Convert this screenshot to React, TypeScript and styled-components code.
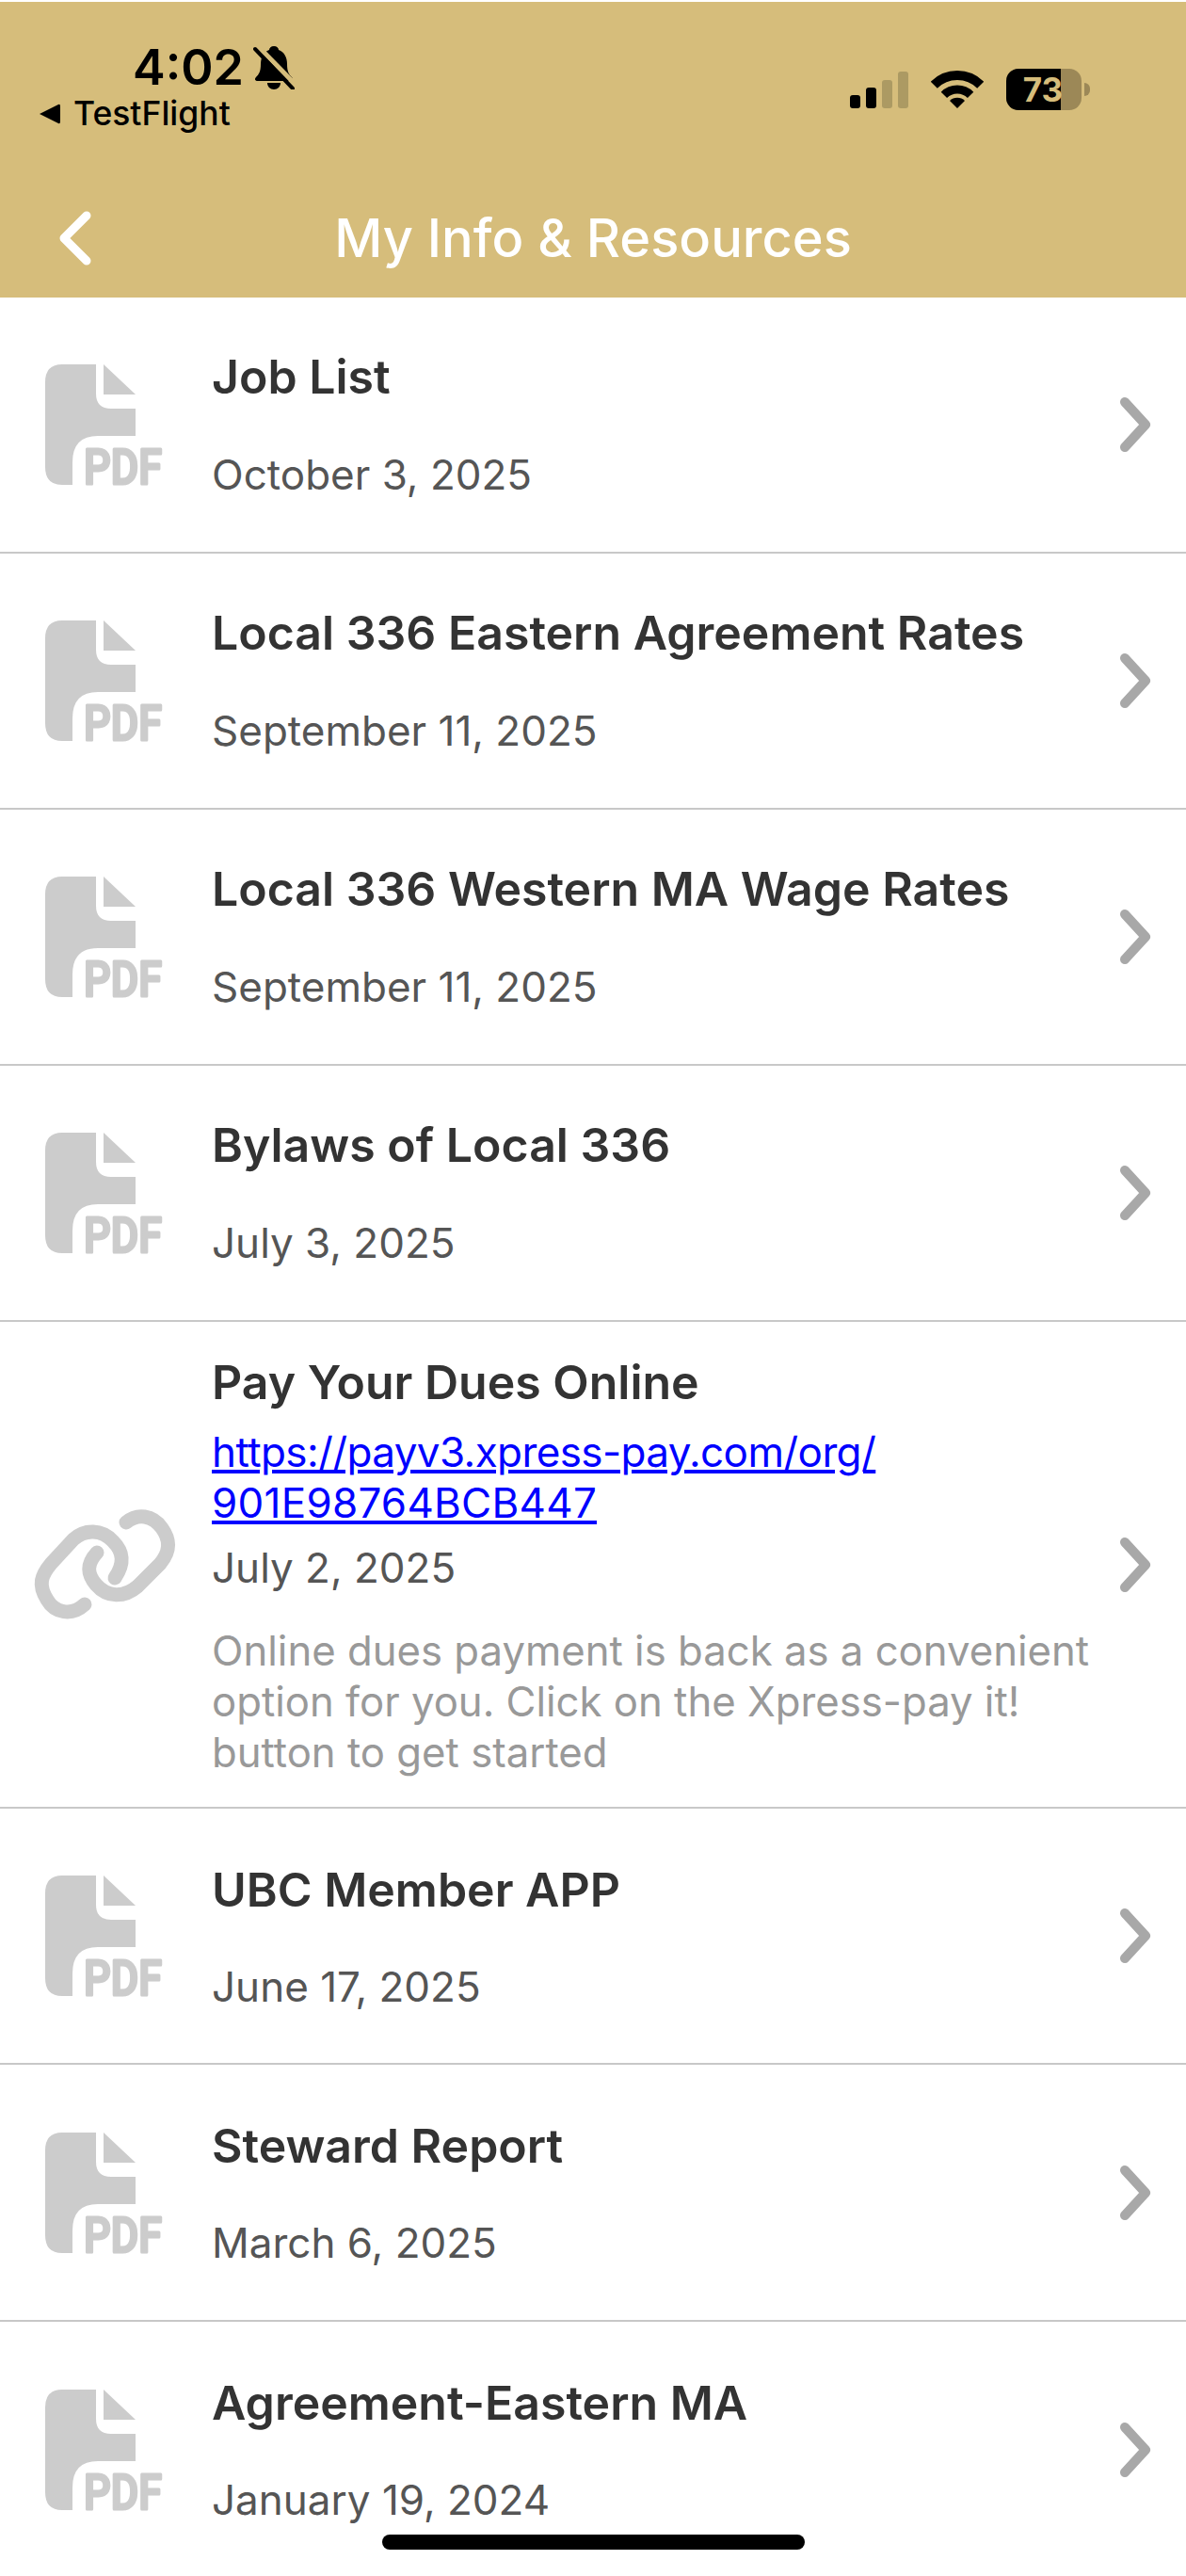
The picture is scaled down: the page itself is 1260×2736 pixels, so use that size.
import React from "react";
import styled, { createGlobalStyle } from "styled-components";

const Global = createGlobalStyle`
  html, body { margin: 0; padding: 0; background: #fff; }
  body { font-family: Inter, "Liberation Sans", sans-serif; }
`;

const Page = styled.div`
  position: relative;
  width: 1260px;
  height: 2736px;
  overflow: hidden;
  background: #fff;
`;

const Header = styled.header`
  height: 314px;
  margin-top: 2px;
  background: #d6bd7b;
  display: flex;
  flex-direction: column;
`;

const StatusBar = styled.div`
  height: 157px;
  padding: 45px 102px 0 41px;
  box-sizing: border-box;
  display: flex;
  justify-content: space-between;
  align-items: flex-start;
`;

const StatusLeft = styled.div`
  display: flex;
  flex-direction: column;
`;

const TimeRow = styled.div`
  display: flex;
  align-items: center;
  gap: 10px;
  margin-left: 100px;
  height: 50px;
`;

const Time = styled.span`
  font-size: 52px;
  line-height: 50px;
  font-weight: 600;
  color: #000;
`;

const BackApp = styled.div`
  display: flex;
  align-items: center;
  gap: 14px;
  margin-top: 4px;
  height: 40px;
`;

const BackAppLabel = styled.span`
  font-size: 35.5px;
  line-height: 40px;
  font-weight: 500;
  color: #000;
`;

const StatusRight = styled.div`
  display: flex;
  align-items: flex-end;
  margin-top: 26px;
`;

const Signal = styled.div`
  display: flex;
  align-items: flex-end;
  gap: 6px;
  height: 40px;
  margin-right: 24px;
`;

const SignalBar = styled.span<{ $h: number; $dim?: boolean }>`
  display: block;
  width: 11px;
  height: ${(p) => p.$h}px;
  border-radius: 3px;
  background: ${(p) => (p.$dim ? "#ac9a63" : "#000")};
`;

const Battery = styled.div`
  position: relative;
  display: flex;
  align-items: center;
  margin-left: 24px;
  margin-bottom: -2px;
`;

const BatteryBody = styled.div`
  position: relative;
  width: 80px;
  height: 44px;
  border-radius: 13px;
  overflow: hidden;
  background: #9c8857;
`;

const BatteryFill = styled.div`
  width: 58px;
  height: 100%;
  background: #000;
`;

const BatteryText = styled.span`
  position: absolute;
  left: 17px;
  top: 0;
  width: 44px;
  text-align: center;
  font-size: 35px;
  line-height: 44px;
  font-weight: 700;
  color: #d6bd7b;
`;

const BatteryNub = styled.span`
  width: 6px;
  height: 14px;
  margin-left: 3px;
  border-radius: 0 7px 7px 0;
  background: #9c8857;
`;

const NavBar = styled.nav`
  flex: 1;
  display: grid;
  grid-template-columns: 1fr auto 1fr;
  align-items: center;
  padding-top: 31px;
`;

const BackButton = styled.div`
  display: flex;
  padding-left: 56px;
`;

const NavTitle = styled.h1`
  margin: 0;
  font-size: 56px;
  line-height: 64px;
  font-weight: 500;
  color: #fff;
`;

const List = styled.main`
  display: flex;
  flex-direction: column;
`;

const Row = styled.section<{ $h: number }>`
  height: ${(p) => p.$h}px;
  box-sizing: border-box;
  border-bottom: 2px solid #c8c8c8;
  display: flex;
  align-items: center;
  &:last-child {
    border-bottom: none;
  }
`;

const IconSlot = styled.div`
  width: 225px;
  flex: none;
  display: flex;
  justify-content: flex-start;
`;

const Body = styled.div`
  flex: 1;
  min-width: 0;
  align-self: stretch;
  display: flex;
  flex-direction: column;
`;

const Title = styled.div<{ $top: number }>`
  margin-top: ${(p) => p.$top}px;
  font-size: 50px;
  line-height: 54px;
  font-weight: 600;
  color: #333;
  white-space: nowrap;
`;

const DateText = styled.div<{ $gap: number }>`
  margin-top: ${(p) => p.$gap}px;
  font-size: 44px;
  line-height: 54px;
  font-weight: 400;
  color: #555;
`;

const LinkText = styled.a`
  display: block;
  margin-top: 20px;
  font-size: 44px;
  line-height: 54px;
  color: #0000ff;
  text-decoration: underline;
  white-space: nowrap;
`;

const LinkLine = styled.span<{ $tracking: number }>`
  display: block;
  width: fit-content;
  letter-spacing: ${(p) => p.$tracking}px;
`;

const Description = styled.div`
  margin-top: 35px;
  font-size: 43.7px;
  line-height: 54px;
  color: #999;
  white-space: pre;
`;

const Chevron = styled.div`
  width: 71px;
  flex: none;
  display: flex;
`;

const HomeIndicator = styled.div`
  position: absolute;
  left: 406px;
  top: 2692px;
  width: 449px;
  height: 16px;
  border-radius: 8px;
  background: #000;
`;

const PdfLabel = styled.text`
  font-family: Roboto, "Liberation Sans", sans-serif;
  font-size: 52px;
  font-weight: 500;
  fill: #ccc;
  stroke: #ccc;
  stroke-width: 3px;
  stroke-linejoin: round;
`;

const PdfSvg = styled.svg`
  margin-left: 46px;
  overflow: visible;
`;

const LinkSvg = styled.svg`
  margin-left: 32px;
`;

const PdfIcon = () => (
  <PdfSvg width="180" height="130" viewBox="0 0 180 130">
    <path d="M20 1 H56 V32 Q56 48 72 48 H98 V77 H58 Q31 77 31 105 V129 H20 Q2 129 2 110 V20 Q2 1 20 1 Z" fill="#ccc" />
    <path d="M64 1 L98 33 H64 Z" fill="#ccc" />
    <PdfLabel x="43" y="127.5" textLength="83" lengthAdjust="spacingAndGlyphs">PDF</PdfLabel>
  </PdfSvg>
);

const LinkIcon = () => (
  <LinkSvg width="160" height="130" viewBox="32 198 160 130">
    <g fill="none" stroke="#ccc" strokeWidth="15" strokeLinecap="round">
      <path d="M90 305 C76 318 58 314 50 300 C40 284 44 274 54 262 L78 236 C90 225 108 225 120 238 C132 250 132 262 122 277" />
      <path d="M134 218 C146 208 162 210 172 224 C182 238 180 250 170 262 L146 286 C132 298 114 298 102 284 C92 272 92 262 103 250" />
    </g>
  </LinkSvg>
);

const RowChevron = () => (
  <Chevron>
    <svg width="40" height="64" viewBox="0 0 40 64">
      <path d="M6 8 L28 32 L6 56" fill="none" stroke="#a8a8a8" strokeWidth="10" strokeLinecap="round" strokeLinejoin="round" />
    </svg>
  </Chevron>
);

const BellSlash = () => (
  <svg width="44" height="46" viewBox="0 0 44 46">
    <path d="M22 0 C25 0 27 2 27 4 C33 6 36 12 36 19 C36 27 38 30 41 33 C43 35 42 37 39 37 H5 C2 37 1 35 3 33 C6 30 8 27 8 19 C8 12 11 6 17 4 C17 2 19 0 22 0 Z" fill="#000" />
    <path d="M15 39 H29 C29 43 26 46 22 46 C18 46 15 43 15 39 Z" fill="#000" />
    <path d="M5 0 L46 42" stroke="#d6bd7b" strokeWidth="5" />
    <path d="M2 3 L42 45" stroke="#000" strokeWidth="4" strokeLinecap="round" />
  </svg>
);

const Wifi = () => (
  <svg width="56" height="40" viewBox="-28 -40 56 40">
    <path d="M-24.7 -24.7 A35 35 0 0 1 24.7 -24.7" fill="none" stroke="#000" strokeWidth="10" />
    <path d="M-14.1 -14.1 A20 20 0 0 1 14.1 -14.1" fill="none" stroke="#000" strokeWidth="9" />
    <path d="M0 0 L-8 -8 A11.3 11.3 0 0 1 8 -8 Z" fill="#000" />
  </svg>
);

type Item = { title: string; date: string };

const before: Item[] = [
  { title: "Job List", date: "October 3, 2025" },
  { title: "Local 336 Eastern Agreement Rates", date: "September 11, 2025" },
  { title: "Local 336 Western MA Wage Rates", date: "September 11, 2025" },
  { title: "Bylaws of Local 336", date: "July 3, 2025" },
];

const after: Item[] = [
  { title: "UBC Member APP", date: "June 17, 2025" },
  { title: "Steward Report", date: "March 6, 2025" },
  { title: "Agreement-Eastern MA", date: "January 19, 2024" },
];

const PdfRow = ({ title, date, top = 57 }: Item & { top?: number }) => (
  <Row $h={272.1}>
    <IconSlot><PdfIcon /></IconSlot>
    <Body>
      <Title $top={top}>{title}</Title>
      <DateText $gap={107 - top + (top > 57 ? 1 : 0)}>{date}</DateText>
    </Body>
    <RowChevron />
  </Row>
);

export default function App() {
  return (
    <Page>
      <Global />
      <Header>
        <StatusBar>
          <StatusLeft>
            <TimeRow>
              <Time>4:02</Time>
              <BellSlash />
            </TimeRow>
            <BackApp>
              <svg width="23" height="22" viewBox="0 0 23 22">
                <path d="M1 11 L21 1 Q23 0 23 3 V19 Q23 22 21 21 Z" fill="#000" />
              </svg>
              <BackAppLabel>TestFlight</BackAppLabel>
            </BackApp>
          </StatusLeft>
          <StatusRight>
            <Signal>
              <SignalBar $h={14} />
              <SignalBar $h={22} />
              <SignalBar $h={30} $dim />
              <SignalBar $h={39} $dim />
            </Signal>
            <Wifi />
            <Battery>
              <BatteryBody>
                <BatteryFill />
                <BatteryText>73</BatteryText>
              </BatteryBody>
              <BatteryNub />
            </Battery>
          </StatusRight>
        </StatusBar>
        <NavBar>
          <BackButton>
            <svg width="44" height="64" viewBox="0 0 44 64">
              <path d="M36 8 L12 32 L36 56" fill="none" stroke="#fff" strokeWidth="9" strokeLinecap="round" strokeLinejoin="round" />
            </svg>
          </BackButton>
          <NavTitle>My Info &amp; Resources</NavTitle>
          <span />
        </NavBar>
      </Header>
      <List>
        {before.map((i) => <PdfRow key={i.title} {...i} />)}
        <Row $h={517}>
          <IconSlot><LinkIcon /></IconSlot>
          <Body>
            <Title $top={37}>Pay Your Dues Online</Title>
            <LinkText>
              <LinkLine $tracking={-0.6}>https://payv3.xpress-pay.com/org/</LinkLine>
              <LinkLine $tracking={0.25}>901E98764BCB447</LinkLine>
            </LinkText>
            <DateText $gap={15}>July 2, 2025</DateText>
            <Description>{"Online dues payment is back as a convenient\noption for you. Click on the Xpress-pay it!\nbutton to get started"}</Description>
          </Body>
          <RowChevron />
        </Row>
        {after.map((i) => <PdfRow key={i.title} {...i} top={59} />)}
      </List>
      <HomeIndicator />
    </Page>
  );
}
